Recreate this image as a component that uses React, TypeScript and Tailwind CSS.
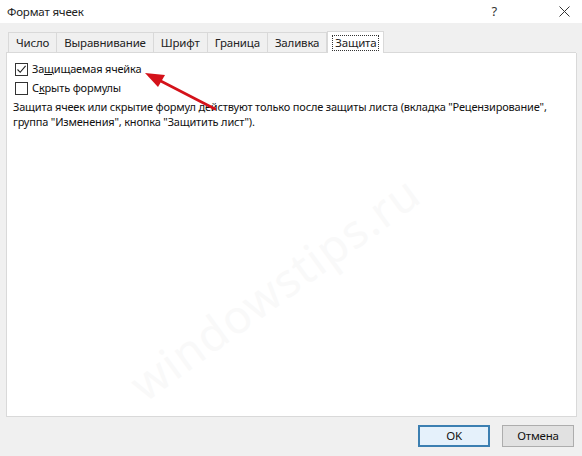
import React from "react";

const tabs = ["Число", "Выравнивание", "Шрифт", "Граница", "Заливка"];

const CheckBox = ({ checked }: { checked?: boolean }) => (
  <span className="w-[13px] h-[13px] border border-[#333] bg-white flex items-center justify-center shrink-0">
    {checked && (
      <svg width="11" height="11" viewBox="0 0 11 11">
        <path d="M1.5 5.5 L4.2 8.3 L9.6 1.8" fill="none" stroke="#222" strokeWidth="1.1" />
      </svg>
    )}
  </span>
);

export default function App() {
  return (
    <div
      className="w-[582px] h-[456px] bg-[#f0f0f0] flex flex-col text-[11px] tracking-[-0.18px] text-[#111] overflow-hidden"
      style={{ fontFamily: '"Noto Sans", "Open Sans", sans-serif' }}
    >
      {/* title bar */}
      <div className="h-[23px] bg-white flex items-center pl-[7px] pr-[12px] shrink-0">
        <span className="text-[11.5px] text-[#222]">Формат ячеек</span>
        <span className="ml-auto mr-[62px] text-[13px] text-[#333]">?</span>
        <svg width="11" height="11" viewBox="0 0 11 11">
          <path d="M0.5 0.5 L10.5 10.5 M10.5 0.5 L0.5 10.5" stroke="#333" strokeWidth="1" />
        </svg>
      </div>

      {/* tabs */}
      <div className="flex items-end px-[6px] mt-[7px] h-[23px] shrink-0">
        <div className="flex items-end h-[20px] border-b border-[#d9d9d9] pl-[2px]">
          {tabs.map((t) => (
            <div
              key={t}
              className="h-[20px] px-[7px] border-t border-l border-[#d9d9d9] last:border-r bg-[#f0f0f0] flex items-center text-[11.5px] text-[#222] leading-none"
            >
              {t}
            </div>
          ))}
        </div>
        <div className="h-[23px] px-[4px] border-t border-l border-r border-[#d9d9d9] bg-white flex items-center -mb-px relative">
          <span className="border border-dotted border-[#333] px-[2px] leading-[14px] text-[11.5px] text-[#222]">Защита</span>
        </div>
        <div className="flex-1 border-b border-[#d9d9d9] h-full"></div>
      </div>

      {/* panel */}
      <div className="relative mx-[6px] mr-[5px] h-[364px] bg-white border border-t-0 border-[#d9d9d9] px-[8px] pt-[7px] overflow-hidden">
        {/* watermark */}
        <div className="absolute left-[95px] top-[200px] -rotate-[36deg] text-[46px] text-[#f9f9f9] tracking-wide pointer-events-none select-none">
          windowstips.ru
        </div>

        <div className="relative flex items-center gap-[4px] h-[18px]">
          <CheckBox checked />
          <span>
            За<u>щ</u>ищаемая ячейка
          </span>
        </div>
        <div className="relative flex items-center gap-[4px] h-[18px] mt-[1px]">
          <CheckBox />
          <span>
            С<u>к</u>рыть формулы
          </span>
        </div>
        <p className="relative mt-[2px] leading-[15px] -ml-[2px] whitespace-nowrap">
          Защита ячеек или скрытие формул действуют только после защиты листа (вкладка "Рецензирование",
          <br />
          группа "Изменения", кнопка "Защитить лист").
        </p>

        {/* red arrow */}
        <svg className="absolute left-0 top-0 pointer-events-none" width="300" height="140">
          <path d="M208 56 L146 24" stroke="#d4121a" strokeWidth="2.6" strokeLinecap="round" />
          <path d="M138 20 L158 22 L151 34 Z" fill="#d4121a" />
        </svg>
      </div>

      {/* buttons */}
      <div className="flex justify-end gap-[12px] pr-[8px] pt-[8px]">
        <button className="w-[72px] h-[22px] border-2 border-[#3c7fb1] bg-[#e5f1fb] text-[11.5px] text-[#111] flex items-center justify-center">
          OK
        </button>
        <button className="w-[72px] h-[22px] border border-[#adadad] bg-[#e1e1e1] text-[11.5px] text-[#111] flex items-center justify-center">
          Отмена
        </button>
      </div>
    </div>
  );
}
